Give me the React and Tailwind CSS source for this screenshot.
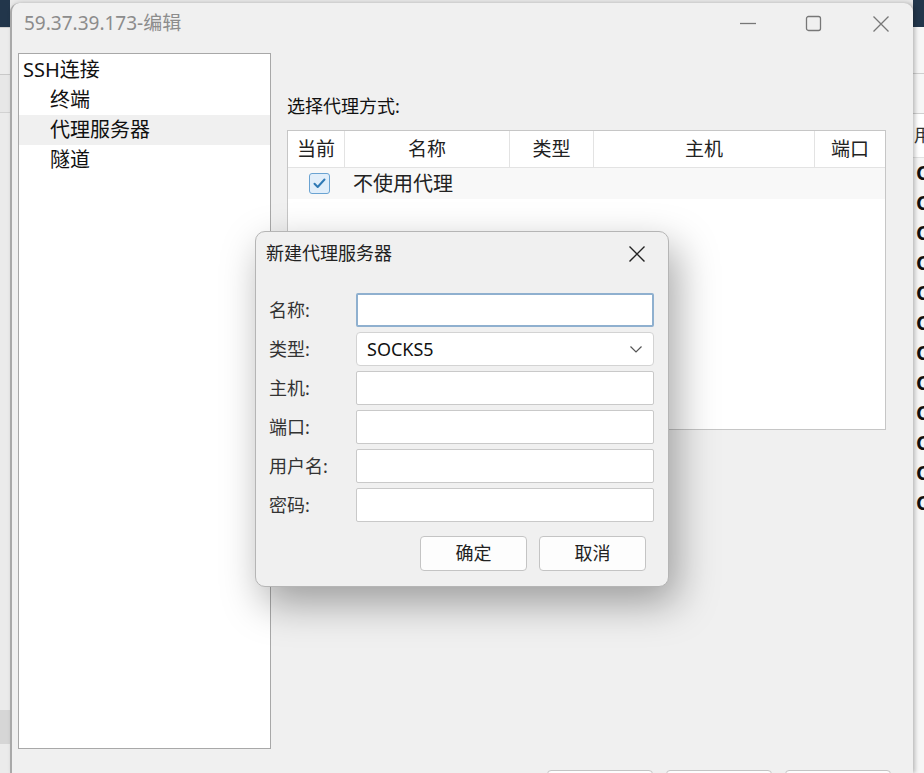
import React from 'react';

const font = { fontFamily: '"Noto Sans", "Noto Sans CJK SC", sans-serif' };

const TreeItem = ({ label, indent, active }) => (
  <div
    className={`h-[30px] flex items-center text-[20px] text-[#111] ${indent ? 'pl-[31px]' : 'pl-[4px]'} ${active ? 'bg-[#f0f0f0]' : ''}`}
  >
    {label}
  </div>
);

const Field = ({ label, children }) => (
  <div className="flex items-center h-[34px]">
    <div className="w-[100px] pl-[13px] text-[18px] text-[#333]">{label}</div>
    {children}
  </div>
);

const TextBox = ({ focused }) => (
  <div
    className={`w-[298px] h-[34px] bg-white rounded-[2px] ${focused ? 'border-2 border-[#8fb0cf]' : 'border border-[#c9c9c9]'}`}
  />
);

const App = () => {
  const rightRows = Array.from({ length: 12 });

  return (
    <div className="w-[924px] h-[773px] relative overflow-hidden flex bg-[#e9e9e9]" style={font}>
      {/* background app, left */}
      <div className="w-[10px] shrink-0 flex flex-col">
        <div className="h-[27px] shrink-0 bg-[#22364b]" />
        <div className="h-[47px] shrink-0 bg-[#ececec] border-t border-[#cfcfcf]" />
        <div className="h-[38px] shrink-0 bg-[#e7e7e7] border-t border-[#c9c9c9]" />
        <div className="h-[598px] shrink-0 bg-[#ebebeb] border-t border-[#d2d2d2]" />
        <div className="h-[34px] shrink-0 bg-[#d6d6d6]" />
        <div className="flex-1 bg-[#ebebeb]" />
      </div>

      {/* main window */}
      <div className="w-[903px] shrink-0 mt-[3px] bg-[#f0f0f0] rounded-t-[9px] border-l-2 border-[#a9a9a9] flex flex-col shadow-[2px_0_4px_rgba(0,0,0,0.25)] z-10">
        <div className="h-[50px] shrink-0 flex items-start">
          <div className="pl-[12px] pt-[6px] text-[19px] text-[#8c8c8c] flex-1">59.37.39.173-编辑</div>
          <div className="flex items-center pt-[11px] text-[#777]">
            <svg width="20" height="20" viewBox="0 0 20 20" className="mr-[46px]">
              <path d="M1 9.5h16" stroke="#777" strokeWidth="1.3" fill="none" />
            </svg>
            <svg width="18" height="18" viewBox="0 0 18 18" className="mr-[49px]">
              <rect x="1.5" y="1.5" width="14" height="14" rx="2" stroke="#777" strokeWidth="1.3" fill="none" />
            </svg>
            <svg width="18" height="18" viewBox="0 0 18 18" className="mr-[23px]">
              <path d="M1.5 1.5l15 15M16.5 1.5l-15 15" stroke="#777" strokeWidth="1.3" fill="none" />
            </svg>
          </div>
        </div>

        <div className="flex shrink-0 pl-[6px] h-[696px]">
          <div className="w-[253px] h-full bg-white border border-[#a8a8a8] pt-[1px]">
            <TreeItem label="SSH连接" />
            <TreeItem label="终端" indent />
            <TreeItem label="代理服务器" indent active />
            <TreeItem label="隧道" indent />
          </div>

          <div className="ml-[16px] flex flex-col">
            <div className="pt-[40px] h-[77px] shrink-0 text-[18px] text-[#111]">选择代理方式:</div>
            <div className="w-[599px] h-[300px] shrink-0 bg-white border border-[#c6c6c6]">
              <div className="flex h-[37px] border-b border-[#e3e3e3] text-[19px] text-[#222]">
                <div className="w-[57px] flex items-center justify-center border-r border-[#e3e3e3]">当前</div>
                <div className="w-[165px] flex items-center justify-center border-r border-[#e3e3e3]">名称</div>
                <div className="w-[84px] flex items-center justify-center border-r border-[#e3e3e3]">类型</div>
                <div className="w-[221px] flex items-center justify-center border-r border-[#e3e3e3]">主机</div>
                <div className="flex-1 flex items-center justify-center">端口</div>
              </div>
              <div className="flex items-center h-[31px] bg-[#f8f8f8]">
                <div className="w-[63px] flex justify-center">
                  <div className="w-[21px] h-[21px] rounded-[3px] border border-[#6aa3d2] bg-[#e1eefa] flex items-center justify-center">
                    <svg width="15" height="15" viewBox="0 0 15 15">
                      <path d="M2.5 7.8l3.2 3.2 6.8-7.5" stroke="#2f79b5" strokeWidth="2" fill="none" strokeLinecap="round" strokeLinejoin="round" />
                    </svg>
                  </div>
                </div>
                <div className="pl-[2px] text-[20px] text-[#222]">不使用代理</div>
              </div>
            </div>
          </div>
        </div>

        <div className="flex shrink-0 justify-end pr-[22px] mt-[21px] gap-[13px]">
          <div className="w-[106px] h-[34px] bg-[#fdfdfd] border border-[#c4c4c4] rounded-[4px]" />
          <div className="w-[106px] h-[34px] bg-[#fdfdfd] border border-[#c4c4c4] rounded-[4px]" />
          <div className="w-[106px] h-[34px] bg-[#fdfdfd] border border-[#c4c4c4] rounded-[4px]" />
        </div>
      </div>

      {/* background app, right */}
      <div className="flex-1 min-w-0 overflow-hidden flex flex-col bg-[#f6f6f6]">
        <div className="h-[27px] shrink-0 bg-[#22364b]" />
        <div className="h-[47px] shrink-0 border-b border-[#cfcfcf]" />
        <div className="h-[40px] shrink-0 border-b border-[#d0d0d0]" />
        <div className="h-[44px] shrink-0 bg-white flex items-center pl-[1px] text-[18px] text-[#333] border-b border-[#e2e2e2]">用</div>
        {rightRows.map((_, i) => (
          <div key={i} className="h-[30px] shrink-0 flex items-center pl-[3px] text-[20px] font-bold text-[#111] leading-none">
            C
          </div>
        ))}
      </div>

      {/* modal dialog */}
      <div className="absolute left-[255px] top-[231px] w-[414px] h-[356px] bg-[#f0f0f0] border border-[#b5b5b5] rounded-[10px] shadow-[8px_16px_40px_rgba(0,0,0,0.35)] z-20 flex flex-col">
        <div className="flex items-center justify-between h-[41px] pl-[10px] pr-[22px] pt-[2px]">
          <div className="text-[18px] text-[#222]">新建代理服务器</div>
          <svg width="18" height="18" viewBox="0 0 18 18">
            <path d="M1.5 1.5l15 15M16.5 1.5l-15 15" stroke="#222" strokeWidth="1.4" fill="none" />
          </svg>
        </div>
        <div className="flex flex-col gap-[5px] mt-[20px]">
          <Field label="名称:">
            <TextBox focused />
          </Field>
          <Field label="类型:">
            <div className="w-[298px] h-[34px] bg-white border border-[#d3d3d3] rounded-[4px] flex items-center justify-between pl-[10px] pr-[10px]">
              <span className="text-[18px] text-[#111]">SOCKS5</span>
              <svg width="14" height="10" viewBox="0 0 14 10">
                <path d="M1.5 2.5l5.5 5.5 5.5-5.5" stroke="#555" strokeWidth="1.2" fill="none" />
              </svg>
            </div>
          </Field>
          <Field label="主机:">
            <TextBox />
          </Field>
          <Field label="端口:">
            <TextBox />
          </Field>
          <Field label="用户名:">
            <TextBox />
          </Field>
          <Field label="密码:">
            <TextBox />
          </Field>
        </div>
        <div className="flex justify-end gap-[12px] pr-[22px] mt-[14px]">
          <button className="w-[107px] h-[35px] bg-[#fdfdfd] border border-[#c4c4c4] rounded-[4px] text-[18px] text-[#222]">确定</button>
          <button className="w-[107px] h-[35px] bg-[#fdfdfd] border border-[#c4c4c4] rounded-[4px] text-[18px] text-[#222]">取消</button>
        </div>
      </div>
    </div>
  );
};

export default App;
